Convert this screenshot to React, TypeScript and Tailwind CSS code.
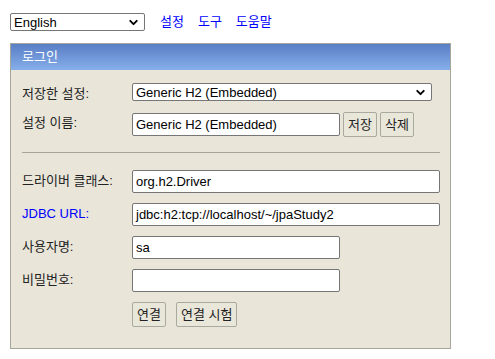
import { ChevronDown } from "lucide-react";

const font = { fontFamily: '"Liberation Sans", "Noto Sans CJK KR", Arial, sans-serif' };

function Select({ value, className }: { value: string; className: string }) {
  return (
    <div
      className={`flex items-center justify-between bg-white border border-[#767676] rounded-[2px] pl-[3px] pr-[4px] ${className}`}
    >
      <span className="text-[13px] leading-none text-black">{value}</span>
      <ChevronDown size={13} strokeWidth={3.5} className="text-black" />
    </div>
  );
}

function Input({ value = "", wide }: { value?: string; wide?: boolean }) {
  return (
    <div
      className={`h-[23px] flex items-center bg-white border border-[#767676] rounded-[2px] px-[3px] text-[13px] text-black ${
        wide ? "w-[308px]" : "w-[208px]"
      }`}
    >
      {value}
    </div>
  );
}

function Button({ label }: { label: string }) {
  return (
    <div className="h-[25px] flex items-center px-[4px] bg-[#e9e6da] border border-[#aaa9a0] rounded-[2px] text-[13px] text-[#222]">
      {label}
    </div>
  );
}

function Row({ label, blue, children }: { label: string; blue?: boolean; children: React.ReactNode }) {
  return (
    <div className="flex items-start">
      <div className={`w-[110px] pt-[2px] text-[13px] leading-[17px] ${blue ? "text-[#0000ff]" : "text-[#222]"}`}>
        {label}
      </div>
      {children}
    </div>
  );
}

export default function App() {
  return (
    <div className="w-[495px] h-[359px] bg-white pt-[13px] pl-[10px]" style={font}>
      <div className="h-[18px] flex items-center gap-[15px]">
        <Select value="English" className="w-[135px] h-[18px]" />
        <div className="flex gap-[14px] text-[13px] leading-[18px] text-[#0000ff]">
          <span>설정</span>
          <span>도구</span>
          <span>도움말</span>
        </div>
      </div>

      <div className="mt-[12px] w-[441px] h-[306px] bg-[#e9e6d9] border border-[#a6a59b]">
        <div className="h-[26px] flex items-center pl-[11px] bg-gradient-to-b from-[#5a7ec5] to-[#86afea] text-white text-[13px]">
          로그인
        </div>

        <div className="pl-[11px] pt-[13px] flex flex-col">
          <Row label="저장한 설정:">
            <Select value="Generic H2 (Embedded)" className="w-[300px] h-[18px]" />
          </Row>
          <div className="mt-[10px]">
            <Row label="설정 이름:">
              <div className="flex items-center gap-[3px]">
                <Input value="Generic H2 (Embedded)" />
                <Button label="저장" />
                <Button label="삭제" />
              </div>
            </Row>
          </div>

          <div className="mt-[15px] w-[418px] border-t border-[#a6a59b]" />

          <div className="mt-[17px] flex flex-col gap-[10px]">
            <Row label="드라이버 클래스:">
              <Input value="org.h2.Driver" wide />
            </Row>
            <Row label="JDBC URL:" blue>
              <Input value="jdbc:h2:tcp://localhost/~/jpaStudy2" wide />
            </Row>
            <Row label="사용자명:">
              <Input value="sa" />
            </Row>
            <Row label="비밀번호:">
              <Input />
            </Row>
            <div className="flex gap-[10px] pl-[110px]">
              <Button label="연결" />
              <Button label="연결 시험" />
            </div>
          </div>
        </div>
      </div>
    </div>
  );
}
